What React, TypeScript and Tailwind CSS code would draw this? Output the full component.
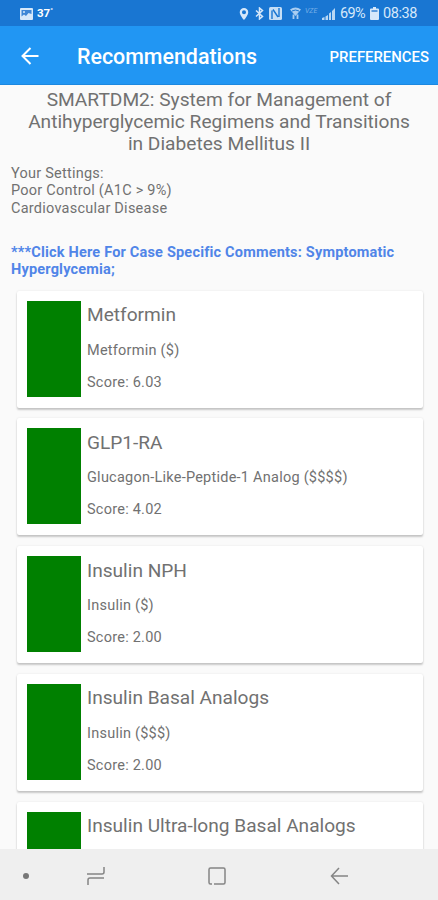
const drugs = [
  { name: 'Metformin', detail: 'Metformin ($)', score: '6.03' },
  { name: 'GLP1-RA', detail: 'Glucagon-Like-Peptide-1 Analog ($$$$)', score: '4.02' },
  { name: 'Insulin NPH', detail: 'Insulin ($)', score: '2.00' },
  { name: 'Insulin Basal Analogs', detail: 'Insulin ($$$)', score: '2.00' },
  { name: 'Insulin Ultra-long Basal Analogs' },
];

function StatusBar() {
  return (
    <div className="flex h-[26px] shrink-0 items-center bg-[#1976d2] pl-5 pr-[19px] pt-px text-[#d6e8fa]">
      <svg width="13" height="12" viewBox="0 0 13 12">
        <rect width="13" height="12" rx="1" fill="#d6e8fa" />
        <path d="M1.500 2h10v4L8.500 5 6 8 4 6.500 1.500 8.500z" fill="#3d86d6" />
        <circle cx="4" cy="4" r="1" fill="#d6e8fa" />
      </svg>
      <span className="ml-[4px] text-[11.500px] font-bold leading-[25px] text-white">37<span className="align-top text-[7px] leading-[20px]">°</span></span>
      <div className="ml-auto flex items-center">
        <svg width="10" height="12" viewBox="0 0 10 13">
          <path fillRule="evenodd" d="M5 0a4.600 4.600 0 0 0-4.600 4.600C.4 8 5 13 5 13s4.600-5 4.600-8.400A4.600 4.600 0 0 0 5 0zm0 2.400a2.200 2.200 0 1 1 0 4.400 2.200 2.200 0 0 1 0-4.400z" fill="currentColor" />
        </svg>
        <svg className="ml-[6px]" width="9" height="13" viewBox="0 0 9 13" fill="none" stroke="currentColor" strokeWidth="1.500">
          <path d="M1 3.500l6.500 6L4.500 12V1l3 2.500L1 9.500" />
        </svg>
        <svg className="ml-[5px]" width="13" height="13" viewBox="0 0 13 13">
          <rect width="13" height="13" rx="1.500" fill="#c5def6" />
          <path d="M3 12V3.500M4 2.500l5 7.500M10 10V1" fill="none" stroke="#1976d2" strokeWidth="1.400" />
        </svg>
        <svg className="ml-[8px]" width="11" height="13" viewBox="0 0 11 13">
          <path d="M0 2.500q5.500-4 11 0L5.500 9z" fill="#a9cdf1" />
          <path d="M2 4q3.500-2 7 0" fill="none" stroke="#1976d2" />
          <path d="M3.500 12V7.500M7.500 12V7.500" stroke="#a9cdf1" strokeWidth="1.800" />
        </svg>
        <span className="ml-[4px] w-[15px] -translate-y-[2px] text-[7px] italic leading-none text-[#77afe7]">VZE</span>
        <svg className="ml-[2px]" width="13" height="12" viewBox="0 0 13 12" fill="#b9d7f4">
          <path d="M0 12v-2l2.500-1v3zM3.500 12V8.500L6 7v5zM7 12V5.500l2-1.500v8zM10 12V3l3-3v12z" />
        </svg>
        <span className="ml-[5px] w-[27px] whitespace-nowrap text-[14.500px] leading-[25px] tracking-[-0.600px]">69%</span>
        <svg className="ml-[3px]" width="9" height="13" viewBox="0 0 9 13">
          <path d="M3 0h3v1.500h2q1 0 1 1V12q0 1-1 1H1q-1 0-1-1V2.500q0-1 1-1h2z" fill="currentColor" />
          <path d="M1.500 3h6v2h-6z" fill="#5b9bdd" />
        </svg>
        <span className="ml-[4px] w-[36px] whitespace-nowrap text-[14.500px] leading-[25px] tracking-[-0.400px]">08:38</span>
      </div>
    </div>
  );
}

function AppBar() {
  return (
    <header className="flex h-[59px] shrink-0 items-center border-b border-[#1c88e0] bg-[#2196f3] pl-[21px] pr-[9px] pt-[2px] text-white">
      <svg width="18" height="18" viewBox="0 0 18 18" fill="none" stroke="currentColor" strokeWidth="2">
        <path d="M17.500 9H2M9.500 1L1.500 9l8 8" />
      </svg>
      <h1 className="ml-[38px] mt-[2px] whitespace-nowrap text-[21.400px] font-medium leading-none">Recommendations</h1>
      <button className="ml-auto mt-[2px] whitespace-nowrap text-[14.900px] font-medium leading-none">PREFERENCES</button>
    </header>
  );
}

function DrugCard({ name, detail, score }: { name: string; detail?: string; score?: string }) {
  return (
    <article className="mb-[10.750px] flex h-[117px] shrink-0 rounded-[2px] bg-white pl-[10px] pt-[10px] shadow-[0_2px_2px_rgba(0,0,0,0.2),0_0_2px_rgba(0,0,0,0.1)]">
      <div className="h-[96px] w-[54px] bg-[#008000]" />
      <div className="ml-[6px] whitespace-nowrap">
        <h2 className="mt-[2.500px] text-[19.100px] leading-[24px]">{name}</h2>
        {detail && <p className="mt-[13.500px] text-[14.500px] leading-[20px] tracking-[0.240px]">{detail}</p>}
        {score && <p className="mt-[12px] text-[14.500px] leading-[20px] tracking-[0.240px]">Score: {score}</p>}
      </div>
    </article>
  );
}

function NavigationBar() {
  return (
    <nav className="flex h-[51px] shrink-0 items-center bg-[#efefef] pl-[23px] pt-[2px] text-[#858585]">
      <div className="h-[6px] w-[6px] rounded-full bg-[#777]" />
      <svg className="ml-[57px]" width="20" height="20" viewBox="0 0 20 20" fill="none" stroke="currentColor" strokeWidth="1.500">
        <path d="M1 8h15q2 0 2-2V1M18 12H4q-2 0-2 2v5" />
      </svg>
      <svg className="ml-[102px]" width="18" height="18" viewBox="0 0 18 18" fill="none" stroke="currentColor" strokeWidth="1.500">
        <path d="M4 17H2.500Q1 17 1 15.500v-13Q1 1 2.500 1h13Q17 1 17 2.500v13q0 1.500-1.500 1.500H6" />
      </svg>
      <svg className="ml-[104px]" width="18" height="18" viewBox="0 0 18 18" fill="none" stroke="currentColor" strokeWidth="1.500">
        <path d="M18 9H1.500M9 1L1.500 9 9 17" />
      </svg>
    </nav>
  );
}

export default function App() {
  return (
    <div className="flex h-[900px] w-[438px] flex-col overflow-hidden bg-[#fafafa] font-['Roboto',sans-serif] text-[#717171]">
      <StatusBar />
      <AppBar />
      <main className="flex min-h-0 flex-1 flex-col overflow-hidden">
        <p className="mt-[4px] whitespace-nowrap text-center text-[19.150px] leading-[22px]">
          SMARTDM2: System for Management of<br />
          Antihyperglycemic Regimens and Transitions<br />
          in Diabetes Mellitus II
        </p>
        <p className="ml-[11px] mt-[9.500px] whitespace-nowrap text-[14.500px] leading-[17.500px] tracking-[0.240px]">
          Your Settings:<br />
          Poor Control (A1C &gt; 9%)<br />
          Cardiovascular Disease
        </p>
        <p className="ml-[11px] mt-[26.500px] whitespace-nowrap text-[14.500px] font-bold leading-[17.500px] tracking-[0.190px] text-[#5085e8]">
          ***Click Here For Case Specific Comments: Symptomatic<br />
          Hyperglycemia;
        </p>
        <section className="mt-[12px] flex flex-col pl-[17px] pr-[15px]">
          {drugs.map((drug) => (
            <DrugCard key={drug.name} {...drug} />
          ))}
        </section>
      </main>
      <NavigationBar />
    </div>
  );
}
